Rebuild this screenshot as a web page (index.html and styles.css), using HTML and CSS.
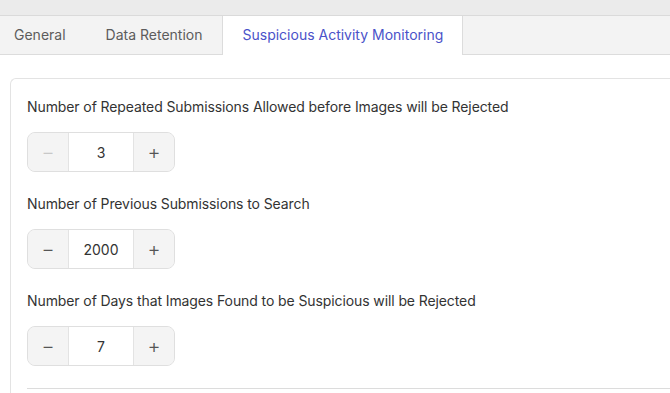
FILE: index.html
```html
<!DOCTYPE html>
<html lang="en">
<head>
    <meta charset="UTF-8">
    <meta name="viewport" content="width=device-width, initial-scale=1.0">
    <title>Suspicious Activity Monitoring</title>
    <link rel="stylesheet" href="styles.css">
</head>
<body>

    <div class="topbar"></div>

    <div class="tabs">
        <div class="tab">General</div>
        <div class="tab">Data Retention</div>
        <div class="tab active">Suspicious Activity Monitoring</div>
    </div>

    <div class="content">
        <div class="panel">
            <div class="field">
                <label>Number of Repeated Submissions Allowed before Images will be Rejected</label>
                <div class="stepper">
                    <button class="step" disabled>&minus;</button>
                    <span class="value">3</span>
                    <button class="step">+</button>
                </div>
            </div>

            <div class="field">
                <label>Number of Previous Submissions to Search</label>
                <div class="stepper">
                    <button class="step">&minus;</button>
                    <span class="value">2000</span>
                    <button class="step">+</button>
                </div>
            </div>

            <div class="field">
                <label>Number of Days that Images Found to be Suspicious will be Rejected</label>
                <div class="stepper">
                    <button class="step">&minus;</button>
                    <span class="value">7</span>
                    <button class="step">+</button>
                </div>
            </div>

            <div class="divider"></div>
        </div>
    </div>

</body>
</html>
```

FILE: styles.css
```css
body {
    font-family: Inter, 'Noto Sans', sans-serif;
    background-color: #fff;
    margin: 0;
    padding: 0;
    color: #333;
    height: 100vh;
    overflow: hidden;
}

.topbar {
    height: 15px;
    background-color: #ebebeb;
    border-bottom: 1px solid #dadada;
}

.tabs {
    display: flex;
    height: 38px;
    margin-left: -6px;
    background-color: #f3f3f3;
    border-bottom: 1px solid #dcdcdc;
}

.tab {
    padding: 0 20px;
    line-height: 38px;
    font-size: 14px;
    color: #5c5c5c;
}

.tab.active {
    background-color: #fff;
    color: #4a52c9;
    border-left: 1px solid #dcdcdc;
    border-right: 1px solid #dcdcdc;
    height: 39px;
    padding: 0 19px;
}

.content {
    padding: 23px 0 0 10px;
}

.panel {
    border-left: 1px solid #e3e3e3;
    border-top: 1px solid #e3e3e3;
    border-top-left-radius: 6px;
    padding: 18px 0 0 16px;
    min-height: 300px;
}

.field {
    margin-bottom: 22px;
}

label {
    display: block;
    font-size: 14px;
    line-height: 20px;
    letter-spacing: -0.1px;
    color: #333;
    margin-bottom: 15px;
}

.stepper {
    display: flex;
    width: 146px;
    height: 38px;
    border: 1px solid #dfdfdf;
    border-radius: 8px;
    overflow: hidden;
    background-color: #f4f4f4;
}

.step {
    width: 40px;
    border: none;
    background-color: #f4f4f4;
    color: #555;
    font-family: inherit;
    font-size: 20px;
    font-weight: 300;
    padding: 0;
    cursor: pointer;
}

.step:disabled {
    color: #c8c8c8;
}

.value {
    flex: 1;
    display: flex;
    justify-content: center;
    align-items: center;
    background-color: #fff;
    border-left: 1px solid #e3e3e3;
    border-right: 1px solid #e3e3e3;
    font-size: 14px;
    color: #333;
}

.divider {
    border-top: 1px solid #dcdcdc;
}
```
